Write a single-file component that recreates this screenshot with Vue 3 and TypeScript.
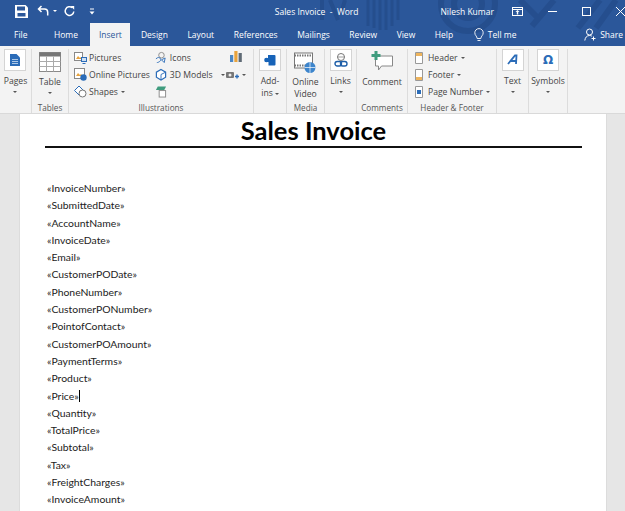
<script setup lang="ts">
const tabs = ['File','Home','Insert','Design','Layout','References','Mailings','Review','View','Help']
const fields = ['InvoiceNumber','SubmittedDate','AccountName','InvoiceDate','Email','CustomerPODate','PhoneNumber','CustomerPONumber','PointofContact','CustomerPOAmount','PaymentTerms','Product','Price','Quantity','TotalPrice','Subtotal','Tax','FreightCharges','InvoiceAmount']
</script>

<template>
  <div class="app">
    <header class="blue">
      <svg class="pattern" width="625" height="46" viewBox="0 0 625 46" fill="none">
        <g stroke="#244c8b" opacity=".8">
          <path d="M322 0v20M330 0l8 20M345 0l-4 14" stroke-width="4" />
          <path d="M368 0v26M374 0v28M380 0v30M386 0v30M392 0v26M398 0v20" stroke-width="3" />
          <circle cx="468" cy="4" r="14" stroke-width="6" />
          <circle cx="468" cy="4" r="27" stroke-width="6" />
          <path d="M520 0l20 20M532 26l22-26M578 28l22-28M596 28l20-28" stroke-width="6" />
        </g>
      </svg>
      <div class="titlebar">
        <div class="qat">
          <svg width="13" height="13" viewBox="0 0 13 13"><path d="M0 0h10.500L13 2.500V13H0z" fill="#fff"/><rect x="2" y="1.500" width="8" height="4" fill="#2b579a"/><rect x="2.500" y="8" width="8" height="3.500" fill="#2b579a"/></svg>
          <svg class="undo" width="12" height="12" viewBox="0 0 12 12"><path d="M4.500 1L1.500 4l3 3M1.500 4H7.500a3.200 3.200 0 0 1 3.200 3.200V10.500" fill="none" stroke="#fff" stroke-width="1.500"/></svg>
          <i class="tri w"></i>
          <svg class="redo" width="11" height="12" viewBox="0 0 11 12"><path d="M8.300 2.800A4.300 4.300 0 1 0 9.800 6.500" fill="none" stroke="#fff" stroke-width="1.500"/><path d="M6.500 1h3.700v3.700z" fill="#fff"/></svg>
          <svg class="more" width="6" height="7" viewBox="0 0 6 7"><path d="M1 1h4" stroke="#fff"/><path d="M.5 3.500h5L3 6.500z" fill="#fff"/></svg>
        </div>
        <div class="doc-title">Sales Invoice&nbsp; -&nbsp; Word</div>
        <div class="user">Nilesh Kumar</div>
        <div class="winbtns">
          <svg width="11" height="9" viewBox="0 0 11 9"><rect x=".5" y=".5" width="10" height="8" fill="none" stroke="#fff"/><path d="M.5 2.500h10" stroke="#fff"/><path d="M5.500 3l2 2H6.200v2.500H4.800V5H3.500z" fill="#fff"/></svg>
          <svg class="min" width="9" height="1" viewBox="0 0 9 1"><path d="M0 .5h9" stroke="#fff"/></svg>
          <svg class="max" width="9" height="9" viewBox="0 0 9 9"><rect x=".5" y=".5" width="8" height="8" fill="none" stroke="#fff"/></svg>
          <svg class="close" width="9" height="9" viewBox="0 0 9 9"><path d="M0 0l9 9M9 0L0 9" stroke="#fff"/></svg>
        </div>
      </div>
      <nav class="tabs">
        <span v-for="t in tabs" :key="t" class="tab" :class="{ active: t === 'Insert' }">{{ t }}</span>
        <span class="tell">
          <svg width="10" height="14" viewBox="0 0 10 14"><path d="M3.200 10.500C3 8 .8 7.500 .8 4.800a4.200 4.200 0 0 1 8.400 0C9.200 7.500 7 8 6.800 10.500zM3.500 12.500h3" fill="none" stroke="#fff" stroke-width=".9"/></svg>
          Tell me
        </span>
        <span class="share">
          <svg width="13" height="13" viewBox="0 0 13 13"><circle cx="5.500" cy="4" r="3" fill="none" stroke="#fff"/><path d="M.8 12.500c.4-3 2-5 4.700-5 1 0 1.800.3 2.400.7M9.500 8.500v4M7.500 10.500h4" fill="none" stroke="#fff"/></svg>
          Share
        </span>
      </nav>
    </header>

    <section class="ribbon">
      <div class="group g-pages">
        <div class="big">
          <div class="tile"><svg width="10" height="12" viewBox="0 0 10 12"><path d="M0 0h6.500L10 3.500V12H0z" fill="#2b6cb8"/><path d="M2 5.500h6M2 7.500h6M2 9.500h6" stroke="#cfe0f3" stroke-width=".8"/></svg></div>
          <span>Pages</span><i class="tri"></i>
        </div>
      </div>
      <div class="group g-tables">
        <div class="big">
          <svg class="tbl" width="22" height="20" viewBox="0 0 22 20"><rect x=".5" y=".5" width="21" height="19" fill="#fff" stroke="#8a8a8a"/><rect x=".5" y=".5" width="21" height="4" fill="#777"/><path d="M.5 9.500h21M.5 14.500h21M7.500 4.500v15M14.500 4.500v15" stroke="#aaa"/></svg>
          <span>Table</span><i class="tri"></i>
        </div>
        <div class="glabel">Tables</div>
      </div>
      <div class="group g-ill">
        <div class="ill-cols">
          <div class="col">
            <div class="row">
              <svg width="13" height="13" viewBox="0 0 13 13"><rect x=".5" y="1.500" width="8" height="8" fill="#fff" stroke="#888"/><path d="M2 8l2-3 2 2 1-1 1.500 2z" fill="#e7a33e"/><rect x="7.500" y="6.500" width="5" height="4" fill="#cfe0f3" stroke="#2b6cb8"/><path d="M8.500 12.500h3" stroke="#2b6cb8"/></svg>
              Pictures
            </div>
            <div class="row">
              <svg width="13" height="13" viewBox="0 0 13 13"><rect x=".5" y=".5" width="10" height="10" fill="#fff" stroke="#888"/><path d="M2 8l2-3 2 2 1-1 2 2z" fill="#e7a33e"/><circle cx="9.500" cy="9.500" r="3.200" fill="#2b6cb8"/></svg>
              Online Pictures
            </div>
            <div class="row">
              <svg width="13" height="13" viewBox="0 0 13 13"><path d="M5 1l4.500 4.500L5 10 .5 5.500z" fill="#fff" stroke="#2b6cb8"/><circle cx="8.500" cy="8.500" r="3.500" fill="#fff" stroke="#777"/></svg>
              Shapes<i class="tri in"></i>
            </div>
          </div>
          <div class="col c2">
            <div class="row">
              <svg width="12" height="13" viewBox="0 0 13 13"><circle cx="7" cy="4" r="3" fill="none" stroke="#8a8a8a"/><path d="M1 8c2-2 4-2 5 0s-2 4-4 4" fill="none" stroke="#2b6cb8"/><path d="M7 9l4-2-1 5z" fill="none" stroke="#2b6cb8"/></svg>
              Icons
            </div>
            <div class="row">
              <svg width="12" height="13" viewBox="0 0 13 13"><path d="M6.500 1l5 3v5.500l-5 3-5-3V4z" fill="#fff" stroke="#2b6cb8" stroke-width="1.300"/><path d="M6.500 6.500V12M6.500 6.500l5-2.500" stroke="#2b6cb8"/></svg>
              3D Models<i class="tri in gap"></i>
            </div>
            <div class="row">
              <svg width="12" height="13" viewBox="0 0 13 13"><path d="M1 5l2-4h9l-2 4z" fill="#3f9c7e"/><rect x="4.500" y="5.500" width="7" height="7" fill="#fff" stroke="#888"/></svg>
            </div>
          </div>
          <div class="col c3">
            <svg width="12" height="11" viewBox="0 0 12 11"><rect x="0" y="4" width="3.200" height="7" fill="#4a86c5"/><rect x="4.300" y="0" width="3.200" height="11" fill="#e8a33d"/><rect x="8.600" y="2" width="3.200" height="9" fill="#5f6a75"/></svg>
            <div class="shot">
              <svg width="13" height="10" viewBox="0 0 13 10"><rect x="0" y="2" width="8" height="6" rx="1" fill="#777"/><circle cx="4" cy="5" r="1.500" fill="#eee"/><path d="M9 6.500h4M11 4.500v4" stroke="#2b6cb8" stroke-width="1.400"/></svg>
              <i class="tri"></i>
            </div>
          </div>
        </div>
        <div class="glabel">Illustrations</div>
      </div>
      <div class="group g-addins">
        <div class="big">
          <div class="tile"><svg width="12" height="12" viewBox="0 0 12 12"><path d="M4 1h6.500A1 1 0 0 1 11.500 2v8.500a1 1 0 0 1-1 1H4.500V8H1V4.500h3z" fill="#1763b8"/><circle cx="2.500" cy="6" r="2.300" fill="#1763b8"/></svg></div>
          <span class="two">Add-<br />ins<i class="tri in"></i></span>
        </div>
      </div>
      <div class="group g-media">
        <div class="big">
          <svg class="vid" width="22" height="22" viewBox="0 0 22 22"><rect x=".5" y="1" width="18" height="15" fill="#fff" stroke="#777"/><path d="M.5 3.500h18M.5 13.500h18" stroke="#777" stroke-width="2" stroke-dasharray="1.500 1"/><circle cx="16" cy="15.500" r="5.500" fill="#3d85cc"/><path d="M10.500 15.500h11M16 10v11" stroke="#fff" stroke-width=".7"/></svg>
          <span class="two">Online<br />Video</span>
        </div>
        <div class="glabel">Media</div>
      </div>
      <div class="group g-links">
        <div class="big">
          <div class="tile"><svg width="14" height="14" viewBox="0 0 14 14"><circle cx="7" cy="4" r="3.500" fill="#fff" stroke="#777"/><path d="M3.500 4h7" stroke="#777" stroke-width=".7"/><rect x="1" y="8.500" width="6.500" height="4.500" rx="2.200" fill="none" stroke="#1f5fa8" stroke-width="1.400"/><rect x="6.500" y="8.500" width="6.500" height="4.500" rx="2.200" fill="none" stroke="#1f5fa8" stroke-width="1.400"/></svg></div>
          <span>Links</span><i class="tri"></i>
        </div>
      </div>
      <div class="group g-comments">
        <div class="big">
          <svg class="cmt" width="24" height="22" viewBox="0 0 24 22"><path d="M5.500 6h17v10h-11l-3 4v-4h-3z" fill="#fff" stroke="#888"/><path d="M6 1v9M1.500 5.500h9" stroke="#3f9c7e" stroke-width="3"/></svg>
          <span>Comment</span>
        </div>
        <div class="glabel">Comments</div>
      </div>
      <div class="group g-hf">
        <div class="col">
          <div class="row"><svg width="8" height="12" viewBox="0 0 8 12"><path d="M.5.500h7v11h-7z" fill="#fff" stroke="#999"/><rect x="1" y="1" width="6" height="3" fill="#eeb45c"/></svg><span class="hf">Header</span><i class="tri in"></i></div>
          <div class="row"><svg width="8" height="12" viewBox="0 0 8 12"><path d="M.5.500h7v11h-7z" fill="#fff" stroke="#999"/><rect x="1" y="8" width="6" height="3" fill="#eeb45c"/></svg><span class="hf">Footer</span><i class="tri in"></i></div>
          <div class="row"><svg width="8" height="12" viewBox="0 0 8 12"><path d="M.5.500h7v11h-7z" fill="#fff" stroke="#999"/><rect x="2" y="4" width="4" height="4" fill="#2b6cb8"/></svg><span class="hf">Page Number</span><i class="tri in"></i></div>
        </div>
        <div class="glabel">Header &amp; Footer</div>
      </div>
      <div class="group g-text">
        <div class="big">
          <div class="tile"><svg width="12" height="12" viewBox="0 0 12 12"><path d="M1 10L8 1.500h1.500L9 10M3.500 7H9.500" fill="none" stroke="#2b6cb8" stroke-width="1.800"/></svg></div>
          <span>Text</span><i class="tri"></i>
        </div>
      </div>
      <div class="group g-sym">
        <div class="big">
          <div class="tile omega">Ω</div>
          <span>Symbols</span><i class="tri"></i>
        </div>
      </div>
    </section>

    <main class="workspace">
      <article class="page">
        <h1>Sales Invoice</h1>
        <ul class="fields">
          <li v-for="f in fields" :key="f">«{{ f }}»<span v-if="f === 'Price'" class="caret"></span></li>
        </ul>
      </article>
    </main>
  </div>
</template>

<style>
html, body { margin: 0; overflow: hidden; }
</style>

<style scoped>
.app { width: 625px; height: 511px; display: flex; flex-direction: column; overflow: hidden; background: #e6e6e6; font-family: "Open Sans", "Noto Sans", sans-serif; }
.blue { position: relative; height: 46px; flex: none; background: #2b579a; color: #fff; font-size: 8.5px; }
.pattern { position: absolute; left: 0; top: 0; }
.titlebar { position: relative; height: 23px; padding-bottom: 1px; box-sizing: border-box; display: flex; align-items: center; }
.qat { display: flex; align-items: center; padding-left: 15px; width: 277px; box-sizing: border-box; }
.undo { margin-left: 9px; }
.tri { display: block; flex: none; width: 0; height: 0; border-left: 2px solid transparent; border-right: 2px solid transparent; border-top: 2px solid #555; }
.tri.w { border-top-color: #fff; margin-left: 4px; }
.redo { margin-left: 7px; }
.more { margin-left: 14px; }
.doc-title { width: 167px; white-space: nowrap; }
.user { width: 57px; white-space: nowrap; }
.winbtns { display: flex; align-items: center; margin-left: 15px; }
.min { margin-left: 25px; }
.max { margin-left: 25px; }
.close { margin-left: 25px; }
.tabs { position: relative; height: 23px; display: flex; align-items: center; padding-left: 4.250px; }
.tab { padding: 0 9.750px; height: 23px; line-height: 24px; white-space: nowrap; }
.tab:first-child { margin-right: 7px; }
.tab.active { background: #f3f3f3; color: #2b579a; padding: 0 8px 0 9px; margin: 0 1.250px 0 2.250px; }
.tell { display: flex; align-items: center; gap: 4px; margin-left: 11px; }
.share { display: flex; align-items: center; gap: 3px; margin-left: auto; padding-right: 2px; }
.ribbon { flex: none; height: 68px; display: flex; background: #f3f3f3; border-bottom: 1px solid #d9d9d9; box-sizing: border-box; color: #444; font-size: 8.6px; }
.group { position: relative; box-sizing: border-box; height: 64px; margin-top: 3px; border-right: 1px solid #dcdcdc; flex: none; display: flex; flex-direction: column; align-items: center; }
.g-pages { width: 32px; }
.g-tables { width: 37px; }
.g-ill { width: 185px; }
.g-addins { width: 33px; }
.g-media { width: 38px; }
.g-links { width: 32px; }
.g-comments { width: 51px; }
.g-hf { width: 89px; }
.g-text { width: 32px; }
.g-sym { width: 39px; }
.big { display: flex; flex-direction: column; align-items: center; height: 52px; line-height: 12px; white-space: nowrap; }
.big .tri { margin-top: 4px; }
.big > svg { flex: none; }
.tile { flex: none; width: 22px; height: 22px; background: #fff; border: 1px solid #d4d4d4; box-sizing: border-box; display: flex; align-items: center; justify-content: center; margin-bottom: 4px; }
.tbl { margin: 3px 0 4px; }
.vid { margin: 3px 0 2px; }
.cmt { margin: 1px 0 4px; }
.two { text-align: center; line-height: 12px; }
.two .tri { display: inline-block; vertical-align: middle; margin: 0 0 0 2px; }
.glabel { position: absolute; left: 0; right: 0; top: 53px; text-align: center; font-size: 8.2px; line-height: 12px; color: #555; white-space: nowrap; }
.ill-cols { display: flex; align-self: stretch; padding-left: 5px; }
.col { display: flex; flex-direction: column; }
.c2 { margin-left: 5px; }
.c2 .row { gap: 3px; }
.c3 { align-items: center; margin-left: 1px; padding-top: 2px; }
.shot { display: flex; align-items: center; gap: 3px; margin-top: 8px; }
.row { display: flex; align-items: center; gap: 2px; height: 17px; white-space: nowrap; }
.row .tri.in { margin-left: 1px; }
.row .tri.gap { margin-left: 5px; }
.g-hf .col { align-self: flex-start; padding-left: 7px; }
.hf { margin-left: 3px; }
.omega { color: #2b6cb8; font-size: 12px; font-weight: 700; font-family: "DejaVu Sans", sans-serif; }
.workspace { flex: 1; min-height: 0; padding: 0 18px 0 19px; }
.page { height: 100%; background: #fff; border-left: 1px solid #dcdcdc; border-right: 1px solid #dcdcdc; box-sizing: border-box; padding: 0 24px 0 25px; color: #111; font-family: Lato, Carlito, sans-serif; }
h1 { margin: 0; height: 32px; line-height: 32px; font-size: 25.500px; font-weight: 700; text-align: center; color: #000; border-bottom: 2px solid #111; }
.fields { list-style: none; margin: 32px 0 0; padding: 0 0 0 2px; font-size: 10.400px; line-height: 17.300px; color: #222; }
.caret { display: inline-block; width: 1px; height: 12px; background: #000; vertical-align: -2px; }
</style>
